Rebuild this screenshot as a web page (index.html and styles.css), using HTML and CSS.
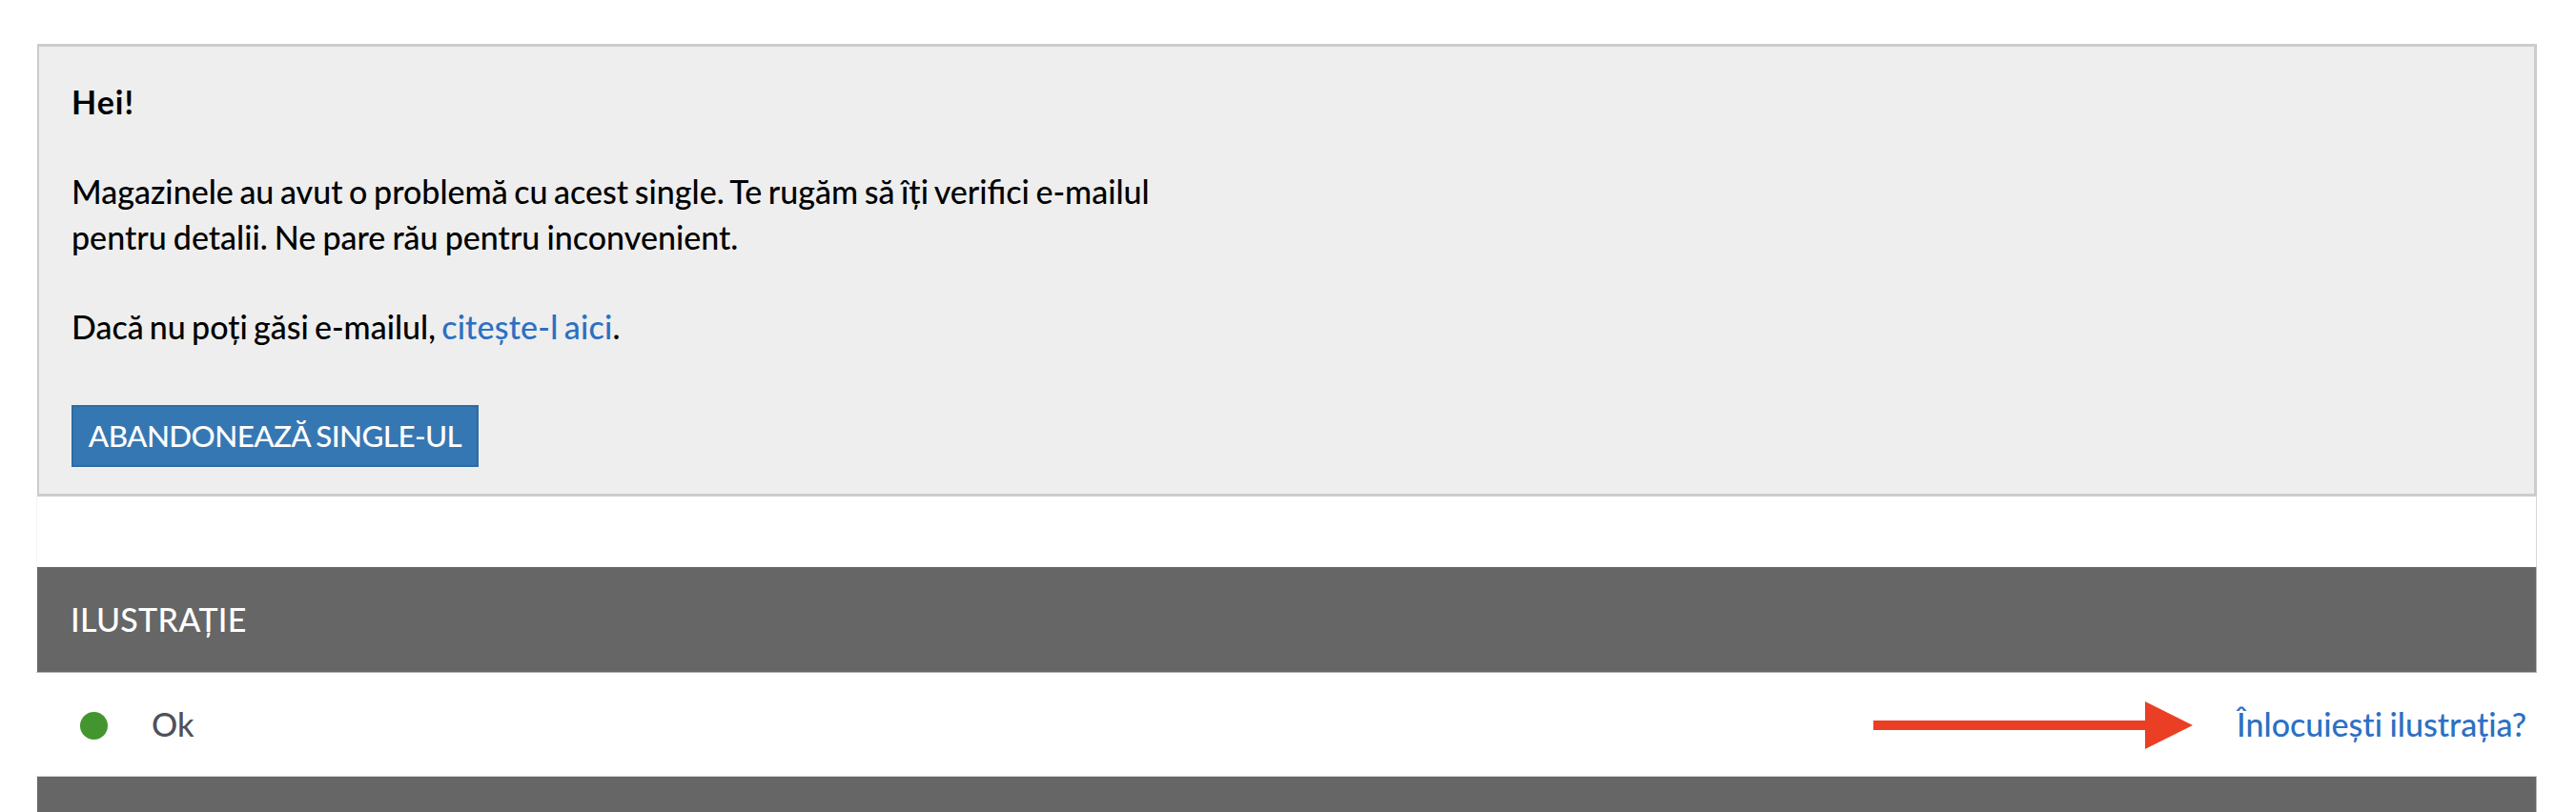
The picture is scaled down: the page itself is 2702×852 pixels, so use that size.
FILE: index.html
```html
<!DOCTYPE html>
<html lang="ro">
<head>
<meta charset="utf-8">
<title>Ilustrație</title>
<link rel="stylesheet" href="styles.css">
</head>
<body>
<main class="page">
<section class="notice">
<p class="greeting">Hei!</p>
<p>Magazinele au avut o problemă cu acest single. Te rugăm să îți verifici e-mailul<br><span class="apology">pentru detalii. Ne pare rău pentru inconvenient.</span></p>
<p class="hint">Dacă nu poți găsi e-mailul, <a href="#">citește-l aici</a>.</p>
<button class="abandon">ABANDONEAZĂ SINGLE-UL</button>
</section>
<div class="spacer"></div>
<h2 class="heading">ILUSTRAȚIE</h2>
<div class="row">
<span class="dot"></span><span class="status">Ok</span>
<svg class="arrow" width="335" height="50" viewBox="0 0 335 50"><path d="M0 20H285V0L335 25L285 50V30H0Z" fill="#ea3f25"/></svg>
<a class="replace" href="#">Înlocuiești ilustrația?</a>
</div>
<div class="heading next"></div>
</main>
</body>
</html>
```
FILE: styles.css
```css
* { box-sizing: border-box; }
html { overflow: hidden; }
body { margin: 0; height: 852px; overflow: hidden; background: #fff; font: 500 34px/47.2px Lato, sans-serif; color: #000; }
a { color: #2c70c3; text-decoration: none; }
.page { width: 2623px; height: 852px; margin-left: 38px; padding-top: 46px; }
.notice { height: 475px; margin-left: 1px; padding: 34px 34px 0; border: 3px solid #ccc; border-left-width: 2px; background: #eee; }
.notice p { margin: 0 0 47.2px; word-spacing: -2px; }
.notice .greeting { font-weight: 700; letter-spacing: 1px; }
.notice .apology { word-spacing: -1.5px; }
.notice .hint { margin-bottom: 58.8px; word-spacing: -2.4px; }
.hint a { letter-spacing: 0.2px; }
.abandon { display: block; width: 427px; height: 65px; padding: 0; border: 2px solid #2d6ca2; background: #3577b3; color: #fff; font: 500 31.4px/60px Lato, sans-serif; letter-spacing: -0.6px; word-spacing: -1px; }
.spacer { height: 74px; border: 1px solid #f4f4f4; border-width: 0 1px; border-right-color: #d8d8d8; }
.heading { height: 111px; margin: 0; padding: 0 35px; border: solid #f3f3f3; border-width: 0 1px 1px; border-right-color: #bbb; border-bottom-color: #b0b0b0; background: #666; background-clip: padding-box; color: #fff; font-size: 34px; font-weight: 500; line-height: 110px; letter-spacing: 0.3px; }
.row { display: flex; align-items: center; height: 109px; padding: 0 11px 0 46px; border-bottom: 1px solid #d8d8d8; }
.dot { width: 29px; height: 29px; margin-top: 2px; border-radius: 50%; background: #43962f; }
.status { margin-left: 46px; color: #50505a; }
.arrow { margin-top: 2px; margin-left: auto; margin-right: 46px; }
.replace { word-spacing: -1px; font-variant-ligatures: none; }
.next { height: 37px; border-bottom: 0; }
```
